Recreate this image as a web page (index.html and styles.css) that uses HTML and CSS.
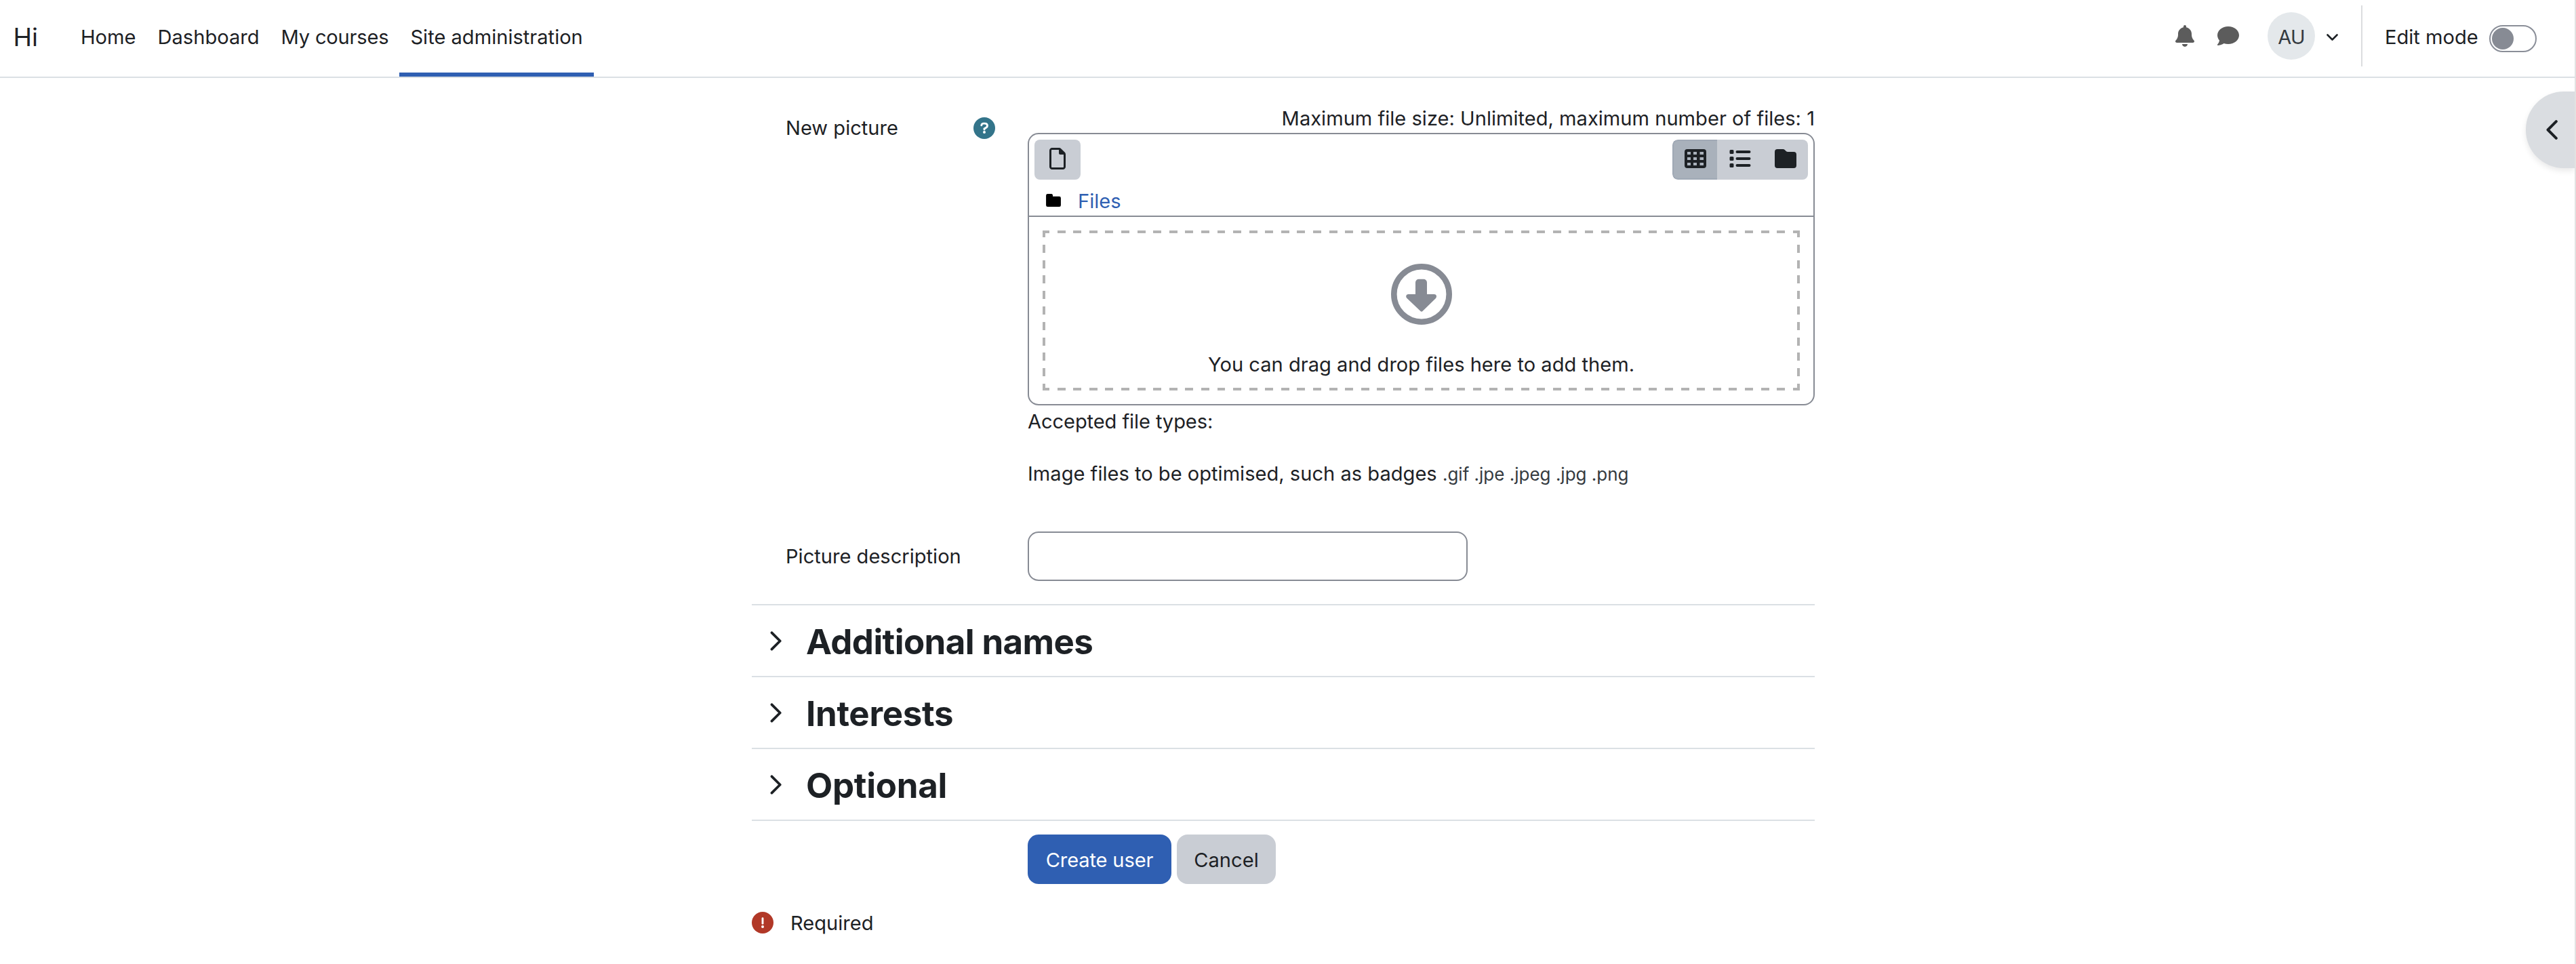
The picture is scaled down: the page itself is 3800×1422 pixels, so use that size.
FILE: index.html
```html
<!DOCTYPE html>
<html lang="en">
<head>
<meta charset="utf-8">
<title>Add a new user</title>
<link rel="stylesheet" href="styles.css">
</head>
<body>
<header class="navbar">
  <a class="brand">Hi</a>
  <nav class="primary-nav">
    <a class="nav-link">Home</a>
    <a class="nav-link">Dashboard</a>
    <a class="nav-link nav-courses">My courses</a>
    <a class="nav-link active">Site administration</a>
  </nav>
  <div class="user-nav">
    <svg class="icon-bell" viewBox="0 0 448 512"><path d="M224 0c-17.700 0-32 14.300-32 32V51.200C119 66 64 130.600 64 208v18.800c0 47-17.300 92.400-48.500 127.600l-7.400 8.300c-8.400 9.400-10.400 22.900-5.300 34.400S19.400 416 32 416H416c12.600 0 24-7.400 29.200-18.900s3.100-25-5.300-34.400l-7.400-8.300C401.300 319.200 384 273.900 384 226.800V208c0-77.400-55-142-128-156.800V32c0-17.700-14.300-32-32-32zm45.300 493.300c12-12 18.700-28.300 18.700-45.300H160c0 17 6.700 33.300 18.700 45.300s28.300 18.700 45.300 18.700s33.300-6.700 45.300-18.700z"/></svg>
    <svg class="icon-comment" viewBox="0 0 512 512"><path d="M512 240c0 114.900-114.600 208-256 208c-37.100 0-72.300-6.400-104.100-17.900c-11.900 8.700-31.300 20.600-54.300 30.600C73.600 471.100 44.700 480 16 480c-6.500 0-12.300-3.900-14.800-9.900c-2.500-6-1.100-12.800 3.400-17.400c.3-.3 .7-.7 1.300-1.400c1.100-1.200 2.800-3.100 4.900-5.700c4.100-5 9.600-12.400 15.200-21.600c10-16.600 19.500-38.400 21.400-62.900C17.700 326.800 0 285.100 0 240C0 125.100 114.600 32 256 32s256 93.100 256 208z"/></svg>
    <span class="avatar">AU</span>
    <svg class="icon-down" viewBox="0 0 17 10"><path d="M1.500 1.500l7 7 7-7"/></svg>
    <span class="divider"></span>
    <span class="edit-label">Edit mode</span>
    <span class="switch"><span class="knob"></span></span>
  </div>
</header>

<button class="drawer-toggle" aria-label="Open block drawer"><svg viewBox="0 0 17 29"><path d="M14.800 2.200L2.500 14.500l12.300 12.300"/></svg></button>
<div class="scroll-edge"></div>

<main class="form">
  <div class="row">
    <div class="label label-picture">
      <span>New picture</span>
      <svg class="icon-help" viewBox="0 0 32 32"><circle cx="16" cy="16" r="16"/><path d="M11.800 11.700c.3-1.700 1.500-2.600 3.200-2.600h1.800c2.200 0 3.700 1.400 3.700 3.400 0 1.300-.7 2.200-1.800 2.800L16 16.900v1.200"/><circle class="dot" cx="16" cy="22" r="2"/></svg>
    </div>
    <div class="field">
      <div class="restrictions">Maximum file size: Unlimited, maximum number of files: 1</div>
      <div class="filemanager">
        <div class="toolbar">
          <div class="buttons">
            <button class="tool add"><svg class="icon-file" viewBox="0 0 384 512"><path d="M320 464c8.800 0 16-7.200 16-16V160H256c-17.700 0-32-14.300-32-32V48H64c-8.800 0-16 7.200-16 16V448c0 8.800 7.200 16 16 16H320zM0 64C0 28.700 28.700 0 64 0H229.500c17 0 33.300 6.700 45.300 18.700l90.500 90.500c12 12 18.700 28.300 18.700 45.300V448c0 35.300-28.700 64-64 64H64c-35.300 0-64-28.700-64-64V64z"/></svg></button>
            <div class="view-group">
              <button class="tool selected"><svg class="icon-view" viewBox="0 0 32 28"><path fill-rule="evenodd" d="M4 0H28a4 4 0 0 1 4 4V24a4 4 0 0 1-4 4H4a4 4 0 0 1-4-4V4a4 4 0 0 1 4-4zM4 4v4h5V4zM13 4v4h5V4zM22.500 4v4h5.500V4zM4 12v4h5v-4zM13 12v4h5v-4zM22.500 12v4h5.500v-4zM4 20v4h5v-4zM13 20v4h5v-4zM22.500 20v4h5.500v-4z"/></svg></button>
              <button class="tool"><svg class="icon-view" viewBox="0 0 32 28"><path d="M2 1h3a1.500 1.500 0 0 1 1.500 1.500v3A1.500 1.500 0 0 1 5 7H2A1.500 1.500 0 0 1 .5 5.500v-3A1.500 1.500 0 0 1 2 1zM2 11h3a1.500 1.500 0 0 1 1.500 1.500v3A1.500 1.500 0 0 1 5 17H2a1.500 1.500 0 0 1-1.500-1.500v-3A1.500 1.500 0 0 1 2 11zM2 21h3a1.500 1.500 0 0 1 1.500 1.500v3A1.500 1.500 0 0 1 5 27H2a1.500 1.500 0 0 1-1.500-1.500v-3A1.500 1.500 0 0 1 2 21zM11.500 2h18a2 2 0 0 1 0 4h-18a2 2 0 0 1 0-4zM11.500 12h18a2 2 0 0 1 0 4h-18a2 2 0 0 1 0-4zM11.500 22h18a2 2 0 0 1 0 4h-18a2 2 0 0 1 0-4z"/></svg></button>
              <button class="tool"><svg class="icon-view" viewBox="0 0 32 28"><path d="M4 0h8q1.800 0 3 1.200l1.700 1.700Q17.800 4 19.500 4H28a4 4 0 0 1 4 4V24a4 4 0 0 1-4 4H4a4 4 0 0 1-4-4V4a4 4 0 0 1 4-4z"/></svg></button>
            </div>
          </div>
          <div class="path"><svg class="icon-path" viewBox="0 0 23 20"><path d="M2.500 0h6q1.600 0 2 2v2H20.500a2.500 2.500 0 0 1 2.500 2.500V17.500a2.500 2.500 0 0 1-2.500 2.500H2.500A2.500 2.500 0 0 1 0 17.500V2.500A2.500 2.500 0 0 1 2.500 0z"/></svg><a>Files</a></div>
        </div>
        <div class="dropzone">
          <svg class="icon-arrow" viewBox="0 0 90 90"><circle cx="45" cy="45" r="40.700"/><path d="M41 22.700h7a5 5 0 0 1 5 5V45H63.500c3.500 0 4.500 3.500 2.500 6L46.500 70q-1.500 1.500-3 0L23.500 51c-2.500-2.500-1-6 2-6H36V27.700a5 5 0 0 1 5-5z"/></svg>
          <span>You can drag and drop files here to add them.</span>
        </div>
      </div>
      <p class="types-title">Accepted file types:</p>
      <p class="types">Image files to be optimised, such as badges <small>.gif .jpe .jpeg .jpg .png</small></p>
    </div>
  </div>

  <div class="row row-description">
    <label class="label" for="desc">Picture description</label>
    <input id="desc" class="text-input" type="text">
  </div>

  <section class="section"><svg class="icon-right" viewBox="0 0 18 29"><path d="M2.500 2.300l12.200 12.200L2.500 26.700"/></svg><h3 class="names">Additional names</h3></section>
  <section class="section"><svg class="icon-right" viewBox="0 0 18 29"><path d="M2.500 2.300l12.200 12.200L2.500 26.700"/></svg><h3>Interests</h3></section>
  <section class="section last"><svg class="icon-right" viewBox="0 0 18 29"><path d="M2.500 2.300l12.200 12.200L2.500 26.700"/></svg><h3>Optional</h3></section>

  <div class="actions">
    <button class="btn btn-primary">Create user</button>
    <button class="btn btn-secondary">Cancel</button>
  </div>
  <div class="required">
    <svg class="icon-required" viewBox="0 0 32 32"><circle cx="16" cy="16" r="16"/><path d="M16 9.700v7.600"/><circle class="dot" cx="16" cy="22" r="2"/></svg>
    <span>Required</span>
  </div>
</main>
</body>
</html>
```
FILE: styles.css
```css
* { box-sizing: border-box; }
body {
  margin: 0;
  height: 1422px;
  overflow: hidden;
  background: #fff;
  color: #1d2125;
  font: 400 29.1px/44px Inter, "Liberation Sans", sans-serif;
}
svg { display: block; flex: none; }
button { border: 0; padding: 0; margin: 0; font: inherit; color: inherit; }
p, h3 { margin: 0; }

/* Top bar */
.navbar {
  display: flex;
  height: 115px;
  border-bottom: 2px solid #dbe0e4;
}
.brand { padding-left: 19.500px; width: 103px; font-size: 37px; line-height: 109px; }
.primary-nav { display: flex; }
.nav-link { padding: 0 16px; line-height: 109px; height: 113px; }
.nav-courses { letter-spacing: -.2px; }
.nav-link.active { border-bottom: 6px solid #2f5fb2; }
.user-nav { display: flex; align-items: center; height: 106px; margin-left: auto; margin-right: 58px; }
.user-nav svg { fill: #5c5c5c; }
.icon-bell { width: 28px; height: 32px; margin-right: 34px; }
.icon-comment { width: 32px; height: 32px; margin-right: 42px; }
.avatar {
  width: 70px; height: 70px;
  border-radius: 50%;
  background: #e4e8eb;
  color: #343a40;
  font-size: 29px;
  line-height: 73px;
  letter-spacing: -.8px;
  text-align: center;
}
.user-nav .icon-down { width: 17px; height: 10px; margin: 3px 34px 0 17px; fill: none; stroke: #1d2125; stroke-width: 2.6; stroke-linecap: round; stroke-linejoin: round; }
.divider { width: 2px; height: 90px; background: #dbdddf; }
.edit-label { margin: 3px 16px 0 33px; width: 138px; white-space: nowrap; }
.switch {
  width: 70px; height: 40px;
  margin-top: 8px;
  padding: 2px;
  border: 2px solid #8a8e98;
  border-radius: 20px;
}
.knob { display: block; width: 32px; height: 32px; border-radius: 50%; background: #878b94; }

.drawer-toggle {
  position: absolute;
  top: 135px;
  right: 2px;
  width: 72px; height: 113px;
  padding-left: 30px;
  border-radius: 56px 0 0 56px;
  background: #dadde1;
  box-shadow: 0 4px 8px rgba(0, 0, 0, .09);
}
.drawer-toggle svg { width: 17px; height: 29px; fill: none; stroke: #1d2125; stroke-width: 4; stroke-linecap: round; stroke-linejoin: round; }
.scroll-edge { position: absolute; top: 0; right: 0; width: 2px; height: 1422px; background: #e2e2e2; }

/* Form */
.form { width: 1568px; margin-left: 1109px; padding-top: 37px; }
.row { display: grid; grid-template-columns: 407px 1fr; }
.label { padding-left: 50px; }
.label-picture { display: flex; justify-content: space-between; align-items: flex-start; padding: 15px 48px 0 50px; }
.icon-help { width: 32px; height: 32px; margin-top: 6px; fill: #33748a; }
.icon-help path { fill: none; stroke: #fff; stroke-width: 2.900; stroke-linecap: round; }
.icon-help .dot, .icon-required .dot { fill: #fff; }
.restrictions { height: 44px; line-height: 45px; text-align: right; }
.filemanager { height: 402px; border: 2px solid #878b94; border-radius: 16px; }
.toolbar { height: 122px; padding: 8px; border-bottom: 2px solid #878b94; }
.buttons { display: flex; justify-content: space-between; }
.tool { display: flex; align-items: center; justify-content: center; height: 59px; background: #c9cdd4; color: #1d2125; }
.tool svg { fill: currentColor; }
.add { width: 68px; border-radius: 8px; }
.icon-file { width: 24px; height: 32px; margin-bottom: 3px; }
.view-group { display: flex; border-radius: 8px; overflow: hidden; }
.view-group .tool { width: 67px; }
.view-group .selected { width: 66px; background: #a9b1bb; border: 2px solid #a0a9b5; border-right: 0; border-radius: 8px 0 0 8px; }
.icon-view { width: 32px; height: 28px; margin-bottom: 3px; }
.path { display: flex; align-items: center; margin-top: 9px; padding-left: 17px; }
.icon-path { width: 22px; height: 19px; margin: 0 25px 3px 0; fill: #000; }
.path a { line-height: 46px; color: #2f5fb2; }
.dropzone {
  display: flex;
  flex-direction: column;
  align-items: center;
  height: 236px;
  margin: 20px 20px 0 20px;
  padding-top: 49px;
  /* 12px dashes along each edge, starting and ending on a corner */
  background:
    repeating-linear-gradient(90deg, #b3b3b3 0 10px, transparent 10px 21.6px, #b3b3b3 21.6px 23.59px) top / 100% 4px no-repeat,
    repeating-linear-gradient(90deg, #b3b3b3 0 10px, transparent 10px 21.6px, #b3b3b3 21.6px 23.59px) bottom / 100% 4px no-repeat,
    repeating-linear-gradient(180deg, #b3b3b3 0 10px, transparent 10px 20.8px, #b3b3b3 20.8px 22.8px) left / 4px 100% no-repeat,
    repeating-linear-gradient(180deg, #b3b3b3 0 10px, transparent 10px 20.8px, #b3b3b3 20.8px 22.8px) right / 4px 100% no-repeat;
}
.icon-arrow { width: 90px; height: 90px; margin-bottom: 37px; fill: #878b94; }
.icon-arrow circle { fill: none; stroke: #878b94; stroke-width: 8.600; }
.types-title { margin-top: 2px; letter-spacing: -.1px; }
.types { height: 44px; margin-top: 33px; }
.types small { font-size: 26px; line-height: 1; color: #343a40; }
.row-description { margin-top: 63px; align-items: center; }
.text-input { width: 649px; height: 73px; padding: 0 24px; border: 2px solid #878b94; border-radius: 16px; background: #fff; font: inherit; }
.row-description + .section { margin-top: 34px; }
.section { display: flex; align-items: center; height: 106px; border-top: 2px solid #dbe0e4; padding-left: 27px; }
.section.last { height: 108px; border-bottom: 2px solid #dbe0e4; }
.section h3 { font-size: 51px; font-weight: 700; line-height: 60px; letter-spacing: -.3px; margin: 3px 0 0 35px; }
.section .names { letter-spacing: -.6px; }
.icon-right { width: 18px; height: 29px; fill: none; stroke: #1d2125; stroke-width: 3.800; stroke-linecap: round; stroke-linejoin: round; }
.actions { display: flex; gap: 8px; margin: 20px 0 0 407px; }
.btn { height: 73px; border-radius: 16px; padding-top: 2px; }
.btn-primary { width: 212px; background: #2f5fb2; color: #fff; letter-spacing: -.15px; }
.btn-secondary { width: 146px; background: #c9cdd4; }
.required { display: flex; gap: 25px; margin-top: 36px; }
.icon-required { width: 32px; height: 32px; margin-top: 5px; fill: #b13827; }
.icon-required path { stroke: #fff; stroke-width: 2.900; stroke-linecap: round; }
```
